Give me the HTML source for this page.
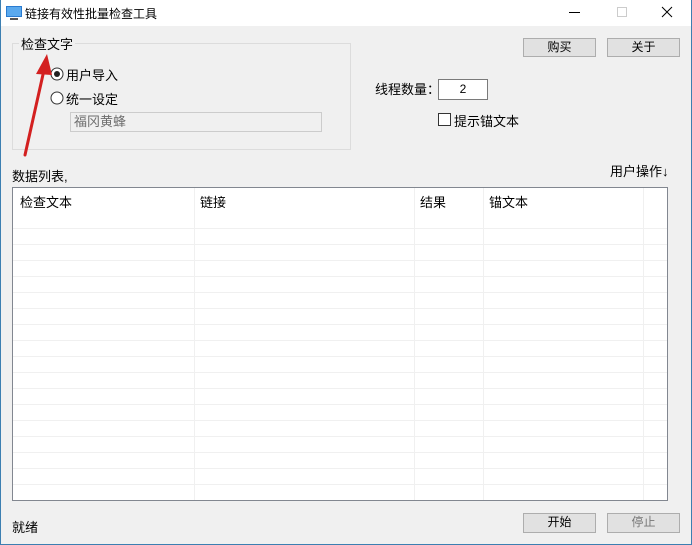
<!DOCTYPE html>
<html><head><meta charset="utf-8">
<style>
*{margin:0;padding:0;box-sizing:border-box}
body{width:692px;height:545px;background:#f0f0f0;font-family:"Liberation Sans","Noto Sans CJK SC",sans-serif;font-size:12px;color:#000;position:relative;overflow:hidden}
.abs{position:absolute}
.win{left:0;top:0;width:692px;height:545px;border:1px solid #3c7fb1;border-top:none}
.title{left:1px;top:0;width:690px;height:26px;background:#fff}
.btn{background:#e1e1e1;border:1px solid #adadad;text-align:center;line-height:17px;font-size:12px}
.grid{left:12px;top:187px;width:656px;height:314px;background:#fff;border:1px solid #828790}
.hl{position:absolute;left:0;right:24px;height:1px;background:#f0f0f0}
.vl{position:absolute;top:0;bottom:0;width:1px;background:#f0f0f0}
</style></head><body>
<div class="abs win"></div>
<div class="abs title"></div>
<svg class="abs" style="left:6px;top:6px" width="16" height="14"><rect x="0" y="0" width="16" height="11" fill="#2a7bd0"/><rect x="1" y="1" width="14" height="9" fill="#5aa9ee"/><rect x="4" y="12" width="8" height="2" fill="#555"/></svg>
<div class="abs" style="left:25px;top:5px;font-size:12px">链接有效性批量检查工具</div>
<div class="abs" style="left:569px;top:12px;width:11px;height:1px;background:#000"></div>
<div class="abs" style="left:617px;top:7px;width:10px;height:10px;border:1px solid #ccc"></div>
<svg class="abs" style="left:661px;top:6px" width="12" height="12"><path d="M1 1L11 11M11 1L1 11" stroke="#000" stroke-width="1"/></svg>

<div class="abs" style="left:12px;top:43px;width:339px;height:107px;border:1px solid #dcdcdc"></div>
<div class="abs" style="left:19px;top:34px;background:#f0f0f0;padding:0 2px;font-size:13px">检查文字</div>
<svg class="abs" style="left:50px;top:67px" width="14" height="14"><circle cx="7" cy="7" r="6" fill="#fff" stroke="#333"/><circle cx="7" cy="7" r="3" fill="#222"/></svg>
<div class="abs" style="left:66px;top:65px;font-size:13px">用户导入</div>
<svg class="abs" style="left:50px;top:91px" width="14" height="14"><circle cx="7" cy="7" r="6" fill="#fff" stroke="#333"/></svg>
<div class="abs" style="left:66px;top:89px;font-size:13px">统一设定</div>
<div class="abs" style="left:70px;top:112px;width:252px;height:20px;border:1px solid #ccc;background:#f0f0f0;color:#6d6d6d;padding-left:3px;line-height:18px;font-size:13px">福冈黄蜂</div>

<div class="abs btn" style="left:523px;top:38px;width:73px;height:19px">购买</div>
<div class="abs btn" style="left:607px;top:38px;width:73px;height:19px">关于</div>
<div class="abs" style="left:375px;top:79px;font-size:13px">线程数量：</div>
<div class="abs" style="left:438px;top:79px;width:50px;height:21px;border:1px solid #7a7a7a;background:#fff;text-align:center;line-height:19px">2</div>
<div class="abs" style="left:438px;top:113px;width:13px;height:13px;border:1px solid #333;background:#fff"></div>
<div class="abs" style="left:454px;top:111px;font-size:13px">提示锚文本</div>
<div class="abs" style="left:12px;top:166px;font-size:13px">数据列表,</div>
<div class="abs" style="left:610px;top:161px;font-size:13px">用户操作↓</div>

<div class="abs grid">
<div class="vl" style="left:181px"></div>
<div class="vl" style="left:401px"></div>
<div class="vl" style="left:470px"></div>
<div class="vl" style="left:630px"></div>
<div class="abs" style="left:7px;top:4px;font-size:13px">检查文本</div>
<div class="abs" style="left:187px;top:4px;font-size:13px">链接</div>
<div class="abs" style="left:407px;top:4px;font-size:13px">结果</div>
<div class="abs" style="left:476px;top:4px;font-size:13px">锚文本</div>
<div id="rows"></div>
</div>
<div class="abs" style="left:12px;top:517px;font-size:13px">就绪</div>
<div class="abs btn" style="left:523px;top:513px;width:73px;height:20px;line-height:16px">开始</div>
<div class="abs btn" style="left:607px;top:513px;width:73px;height:20px;line-height:16px;color:#777">停止</div>
<svg class="abs" style="left:18px;top:50px" width="40" height="110"><path d="M7 105L26 20" stroke="#d32020" stroke-width="3" stroke-linecap="round"/><path d="M29 4L18 24L34 25Z" fill="#d32020"/></svg>
<script>
var r=document.getElementById('rows'),h='';
for(var y=40;y<312;y+=16)h+='<div class="hl" style="top:'+y+'px;right:0"></div>';
r.innerHTML=h;
</script>
</body></html>
